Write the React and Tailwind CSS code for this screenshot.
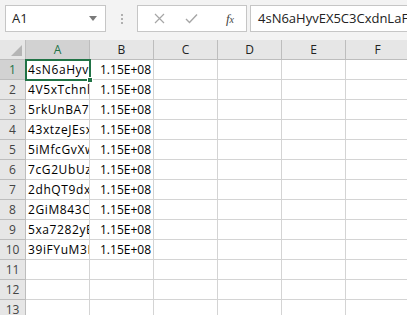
import React from 'react'

const font = { fontFamily: '"Open Sans", "Noto Sans", sans-serif' }

const rows = [
    '4sN6aHyvE',
    '4V5xTchnlQ',
    '5rkUnBA7f',
    '43xtzeJEsx',
    '5iMfcGvXw',
    '7cG2UbUzP',
    '2dhQT9dxM',
    '2GiM843Cq',
    '5xa7282yEr',
    '39iFYuM3Ih',
]

const cols = ['A', 'B', 'C', 'D', 'E', 'F']

function Toolbar() {
    return (
        <div className="h-[40px] bg-[#f3f3f3] flex items-start pt-[5px] pl-[5px] gap-0">
            {/* Name box */}
            <div className="w-[101px] h-[27px] bg-white border border-[#c6c6c6] flex items-center justify-between pl-[6px] pr-[8px]">
                <span className="text-[13px] text-[#222]">A1</span>
                <svg width="8" height="5" viewBox="0 0 8 5">
                    <path d="M0 0 L8 0 L4 5 Z" fill="#7a7a7a" />
                </svg>
            </div>
            {/* Separator dots */}
            <div className="w-[31px] h-[27px] flex flex-col items-center justify-center gap-[2px]">
                <div className="w-[2px] h-[2px] bg-[#b0b0b0]" />
                <div className="w-[2px] h-[2px] bg-[#b0b0b0]" />
                <div className="w-[2px] h-[2px] bg-[#b0b0b0]" />
            </div>
            {/* Formula buttons */}
            <div className="w-[110px] h-[27px] bg-white border border-[#c6c6c6] flex items-center">
                <div className="w-[38px] flex justify-center pl-[4px]">
                    <svg width="11" height="11" viewBox="0 0 11 11">
                        <path d="M1 1 L10 10 M10 1 L1 10" stroke="#a6a6a6" strokeWidth="1.2" />
                    </svg>
                </div>
                <div className="w-[30px] flex justify-center">
                    <svg width="13" height="11" viewBox="0 0 13 11">
                        <path d="M1 6 L4.5 9.5 L12 1.5" stroke="#a6a6a6" strokeWidth="1.4" fill="none" />
                    </svg>
                </div>
                <div className="flex-1 flex justify-center pl-[8px]">
                    <span className="text-[13px] italic text-[#444]" style={{ fontFamily: '"Liberation Serif", serif' }}>
                        f<span className="text-[10px]">x</span>
                    </span>
                </div>
            </div>
            {/* Formula input */}
            <div className="ml-[3px] flex-1 h-[27px] bg-white border border-[#c6c6c6] border-r-0 flex items-center pl-[7px] overflow-hidden">
                <span className="text-[13px] text-[#222] whitespace-nowrap">4sN6aHyvEX5C3CxdnLaF</span>
            </div>
        </div>
    )
}

function HeaderRow() {
    return (
        <div className="flex h-[20px]">
            <div className="w-[26px] shrink-0 bg-[#e6e6e6] border-r border-b border-[#bdbdbd] relative">
                <svg className="absolute right-[3px] bottom-[3px]" width="11" height="11" viewBox="0 0 11 11">
                    <path d="M11 0 L11 11 L0 11 Z" fill="#b5b5b5" />
                </svg>
            </div>
            {cols.map((c, i) => (
                <div
                    key={c}
                    className={
                        i === 0
                            ? 'w-[64px] shrink-0 bg-[#d2d2d2] border-r border-b border-[#bdbdbd] flex items-center justify-center text-[12px] text-[#217346]'
                            : 'w-[64px] shrink-0 bg-[#e6e6e6] border-r border-b border-[#bdbdbd] flex items-center justify-center text-[12px] text-[#222]'
                    }
                >
                    {c}
                </div>
            ))}
        </div>
    )
}

function DataRow({ n, value }) {
    return (
        <div className="flex h-[20px]">
            <div
                className={
                    n === 1
                        ? 'w-[26px] shrink-0 bg-[#d2d2d2] border-r border-b border-[#bdbdbd] flex items-center justify-center text-[12px] text-[#217346]'
                        : 'w-[26px] shrink-0 bg-[#e6e6e6] border-r border-b border-[#bdbdbd] flex items-center justify-center text-[12px] text-[#444]'
                }
            >
                {n}
            </div>
            <div className="w-[64px] shrink-0 border-r border-b border-[#d4d4d4] overflow-hidden flex items-center pl-[2px] text-[12px] tracking-[0.6px] text-black whitespace-nowrap">
                {value}
            </div>
            <div className="w-[64px] shrink-0 border-r border-b border-[#d4d4d4] flex items-center justify-end pr-[2px] text-[12px] text-black">
                {value ? '1.15E+08' : ''}
            </div>
            {[0, 1, 2, 3].map((k) => (
                <div key={k} className="w-[64px] shrink-0 border-r border-b border-[#d4d4d4]" />
            ))}
        </div>
    )
}

export default function App() {
    return (
        <div className="w-[407px] h-[315px] overflow-hidden bg-white" style={font}>
            <Toolbar />
            <div className="relative">
                <HeaderRow />
                {Array.from({ length: 13 }).map((_, i) => (
                    <DataRow key={i} n={i + 1} value={rows[i]} />
                ))}
                {/* Active cell A1 */}
                <div className="absolute left-[25px] top-[19px] w-[66px] h-[22px] border-2 border-[#217346] pointer-events-none" />
                <div className="absolute left-[87px] top-[37px] w-[6px] h-[6px] bg-[#217346] border border-white" />
            </div>
        </div>
    )
}
